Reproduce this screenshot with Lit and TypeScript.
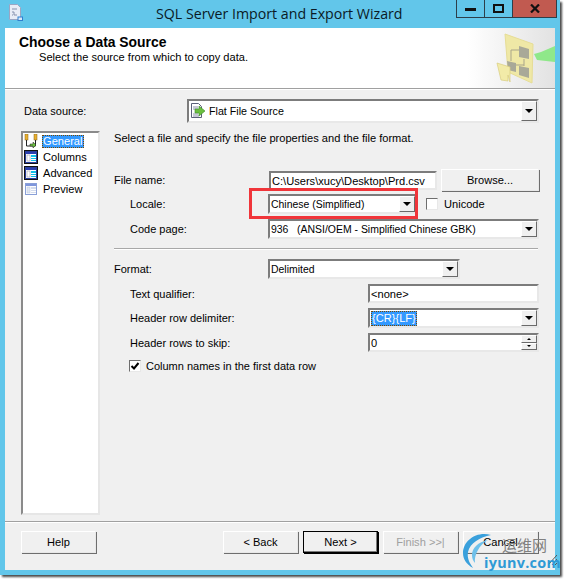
import { LitElement, html, css, svg } from "lit";
import { customElement } from "lit/decorators.js";

const tableIcon = (dark: boolean) => html`<svg class="ico" width="14" height="14" viewBox="0 0 14 14">
  ${dark ? svg`<rect x="0" y="0" width="14" height="14" fill="#111"/>` : svg``}
  <rect x="1.5" y="1.5" width="11" height="11" fill="#fff" stroke="${dark ? "#2a3f9a" : "#8aa0d8"}"/>
  <rect x="2" y="2" width="10" height="2" fill="${dark ? "#2b3fb0" : "#7f96dc"}"/>
  <rect x="3" y="5" width="3" height="6" fill="${dark ? "#fff" : "#dfe6f2"}" stroke="${dark ? "#889" : "#b8c4dc"}" stroke-width=".5"/>
  <rect x="7" y="5" width="5" height="2" fill="${dark ? "#10c0e8" : "#d4dcec"}"/>
  <rect x="7" y="8" width="5" height="1" fill="${dark ? "#10c0e8" : "#d4dcec"}"/>
  <rect x="7" y="10" width="5" height="1" fill="${dark ? "#10c0e8" : "#d4dcec"}"/>
</svg>`;

@customElement("app-root")
export class AppRoot extends LitElement {
  static styles = css`
    :host { display: block; width: 564px; height: 579px; background: #fff; font-family: "Liberation Sans", Arial, sans-serif; font-size: 11.1px; color: #000; overflow: hidden; }
    .window { position: relative; width: 560px; height: 575px; box-sizing: border-box; padding: 0 5px 5px; background: #62c6ea; display: flex; flex-direction: column; box-shadow: 2px 2px 2px #4a4a4a; }
    .titlebar { height: 28px; flex: none; display: flex; align-items: flex-start; }
    .appicon { margin: 4px 0 0 3px; flex: none; }
    .title { margin: 4px 0 0 133px; width: 260px; font: 14.2px/20px "Open Sans", sans-serif; color: #0a1a26; white-space: nowrap; flex: none; }
    .caption { margin: 0 -2px 0 auto; display: flex; height: 18px; flex: none; border: 1px solid #2d3f4a; border-top: none; box-sizing: border-box; width: 101px; }
    .caption div { display: flex; align-items: center; justify-content: center; box-sizing: border-box; }
    .cmin, .cmax { width: 28px; border-right: 1px solid #2d3f4a; }
    .cclose { flex: 1; background: #c15a50; }
    .client { flex: 1; display: flex; flex-direction: column; background: #f0f0f0; min-height: 0; }
    .header { height: 60px; flex: none; box-sizing: content-box; position: relative; background: linear-gradient(90deg, #fff 0, #fff 84%, #e2e2e2 100%); border-bottom: 1px solid #a0a0a0; box-shadow: 0 1px 0 #fff; display: flex; justify-content: space-between; overflow: hidden; }
    .htext { padding: 7px 0 0 14px; }
    .h1 { font-weight: 700; font-size: 13.9px; line-height: 15px; }
    .h2 { margin: 0 0 0 20px; line-height: 14px; }
    .hicon { flex: none; }
    .main { flex: 1; display: grid; grid-template-columns: 79px 1fr; grid-template-rows: 24px 1fr; column-gap: 14px; row-gap: 8px; padding: 10px 16px 6px 16px; min-height: 0; }
    .dslabel { display: flex; align-items: center; padding: 0 0 0 3px; line-height: 24px; margin-top: -1px; font-size: 11px; }
    .dsrow { display: flex; }
    .dsrow .combo { margin-left: 73px; flex: 1; height: 24px; font-size: 10.7px; }
    .list { background: #fff; box-sizing: border-box; border: 2px solid; border-color: #8a8a8a #e6e6e6 #e6e6e6 #8a8a8a; padding: 0 0 0 1px; }
    .item { height: 16px; display: flex; align-items: center; gap: 5px; white-space: nowrap; }
    .ico { flex: none; }
    .sel { background: #3399ff; color: #fff; outline: 1px dotted #7a4a00; outline-offset: -1px; padding: 0 2px 0 1px; line-height: 13px; margin-left: -1px; }
    .panel { display: flex; flex-direction: column; min-width: 0; }
    .intro { height: 14px; line-height: 14px; }
    .row { display: grid; grid-template-columns: 155px 1fr; align-items: center; }
    .row > span { font-size: 11px; }
    .indent { padding-left: 16px; }
    .field { box-sizing: border-box; background: #fff; border: 2px solid; border-color: #7c7c7c #e8e8e8 #e8e8e8 #7c7c7c; height: 20px; display: flex; align-items: center; padding-left: 1px; white-space: nowrap; }
    .combo { box-sizing: border-box; background: #fff; border: 2px solid; border-color: #7c7c7c #e8e8e8 #e8e8e8 #7c7c7c; height: 20px; display: flex; align-items: center; padding-left: 1px; justify-content: space-between; white-space: nowrap; font-size: 10.45px; }
    .combo span { display: flex; align-items: center; gap: 4px; }
    .arrow { align-self: stretch; width: 16px; flex: none; box-sizing: border-box; background: #f0f0f0; border: 1px solid; border-color: #fff #6a6a6a #6a6a6a #fff; display: flex; align-items: center; justify-content: center; margin-left: auto; }
    .arrow i { display: block; width: 0; height: 0; border: 4px solid transparent; border-top: 4px solid #000; border-bottom: 0; }
    .r1 { margin-top: 24px; height: 22px; grid-template-columns: 155px 168px 1fr; }
    .r1 .field { width: 168px; height: 19px; margin-top: 1px; }
    .btn { box-sizing: border-box; background: #f0f0f0; border: 1px solid; border-color: #fff #e8e8e8 #e8e8e8 #fff; box-shadow: 1px 1px 0 #6e6e6e; display: flex; align-items: center; justify-content: center; height: 22px; white-space: nowrap; }
    .browse { width: 98px; margin-left: 4px; }
    .r2 { margin-top: 3px; height: 20px; grid-template-columns: 138px 149px 1fr; position: relative; }
    .uni { display: flex; align-items: center; gap: 6px; margin-left: 9px; }
    .check { box-sizing: border-box; width: 12px; height: 12px; background: #fff; border: 1px solid; border-color: #6e6e6e #e8e8e8 #e8e8e8 #6e6e6e; display: flex; flex: none; }
    .red { position: absolute; left: 135px; top: -6px; width: 169px; height: 31px; box-sizing: border-box; border: 3px solid #f0353a; pointer-events: none; }
    .r3 { margin-top: 5px; height: 20px; grid-template-columns: 138px 1fr; }
    .hr { height: 1px; background: #a8a8a8; border-bottom: 1px solid #fff; margin: 9px 1px 0 0; flex: none; }
    .r4 { margin-top: 9px; height: 20px; grid-template-columns: 154px 192px; }
    .r5 { margin-top: 5px; height: 19px; grid-template-columns: 238px 1fr; }
    .r6 { margin-top: 5px; height: 20px; grid-template-columns: 238px 1fr; }
    .r7 { margin-top: 5px; height: 19px; grid-template-columns: 238px 1fr; }
    .r5 .field, .r6 .combo, .r7 .field { height: 100%; }
    .spin { width: 16px; align-self: stretch; margin-left: auto; display: flex; flex-direction: column; flex: none; }
    .spin div { flex: 1; background: #f0f0f0; border: 1px solid; border-color: #fff #6a6a6a #6a6a6a #fff; box-sizing: border-box; display: flex; align-items: center; justify-content: center; }
    .spin i { display: block; width: 0; height: 0; border: 2px solid transparent; }
    .spin .u { border-bottom: 2px solid #000; border-top: 0; }
    .spin .d { border-top: 2px solid #000; border-bottom: 0; }
    .r8 { margin-top: 8px; padding-left: 15px; display: flex; align-items: center; gap: 5px; height: 12px; font-size: 11px; }
    .selt { background: #3399ff; color: #fff; outline: 1px dotted #7a4a00; outline-offset: -1px; padding: 0 1px; line-height: 15px; font-size: 11.1px; }
    .code { white-space: pre; }
    .footer { height: 49px; flex: none; box-sizing: border-box; border-top: 1px solid #a0a0a0; box-shadow: inset 0 1px 0 #fff; padding: 9px 16px 0; display: flex; }
    .fbtn { width: 75px; }
    .help { margin-right: 127px; }
    .nb { margin-left: 5px; }
    .next { border: 1px solid #000; box-shadow: 1px 1px 0 #000, inset -1px -1px 0 #7a7a7a; }
    .dis { color: #a0a0a0; }
    .mark { position: absolute; right: -3px; bottom: -2px; width: 105px; height: 46px; pointer-events: none; }
    .cn { position: absolute; left: 44px; top: 4px; font: 15px/20px "Noto Sans CJK SC", sans-serif; color: #808080; white-space: nowrap; }
    .en { position: absolute; left: 26px; top: 22px; font: 700 14.4px/20px "Open Sans", sans-serif; color: #2f9ad6; white-space: nowrap; letter-spacing: .3px; }
    .arc { position: absolute; left: 0; top: 0; }
    .grip { position: absolute; right: 6px; bottom: 12px; }
  `;

  render() {
    return html`<div class="window">
      <div class="titlebar">
        <svg class="appicon" width="15" height="17" viewBox="0 0 15 17">
          <path d="M1.5.5h8l3 3v12h-11z" fill="#e8ecf6" stroke="#9aa6c4"/>
          <path d="M4 5h5M4 8h2v3h3M4 11h1" stroke="#8490ad" fill="none"/>
          <rect x="10" y="13" width="4.5" height="3.5" fill="#d8e8f8" stroke="#2f7fd0"/>
        </svg>
        <div class="title">SQL Server Import and Export Wizard</div>
        <div class="caption">
          <div class="cmin"><svg width="11" height="4"><rect y="1" width="11" height="3" fill="#111"/></svg></div>
          <div class="cmax"><svg width="11" height="9"><rect x="1" y="1" width="9" height="7" fill="none" stroke="#111" stroke-width="2"/></svg></div>
          <div class="cclose"><svg width="10" height="9" viewBox="0 0 10 9"><path d="M1 .5L9 8.5M9 .5L1 8.5" stroke="#111" stroke-width="2.2"/></svg></div>
        </div>
      </div>
      <div class="client">
        <div class="header">
          <div class="htext">
            <div class="h1">Choose a Data Source</div>
            <div class="h2">Select the source from which to copy data.</div>
          </div>
          <svg class="hicon" width="62" height="60" viewBox="0 0 62 60">
            <path d="M12 6L40 16L39 55L15 44z" fill="#efe8a6" stroke="#e6dd96"/>
            <path d="M41 26L48 24L62 18V34L44 32z" fill="#8fe88a"/>
            <path d="M18 33V22H26M31 31V38M23 37H31" stroke="#a9a58a" fill="none"/>
            <path d="M26 18L36 21V31L26 29z" fill="#a9a998"/>
            <path d="M14 33L23 35V44L15 42z" fill="#a9a998"/>
            <path d="M26 38L36 40V50L26 47z" fill="#a9a998"/>
            <path d="M4 35L17 39V54L15 47L15 53L8 52z" fill="#f2eba8" stroke="#d8cd80" stroke-width=".7"/>
          </svg>
        </div>
        <div class="main">
          <div class="dslabel">Data source:</div>
          <div class="dsrow">
            <div class="combo"><span>
              <svg width="15" height="16" viewBox="0 0 15 16"><path d="M1.5.5h7l3 3v11h-10z" fill="#fff" stroke="#5a6078"/><path d="M3 4h5M3 6h5M3 11h5M3 13h6" stroke="#8a90a8"/><path d="M5 6h4V3l6 5-6 5v-3H5z" fill="#6bbf3f" stroke="#3e8a2a" stroke-width=".6"/></svg>
              Flat File Source</span><div class="arrow"><i></i></div></div>
          </div>
          <div class="list">
            <div class="item">
              <svg class="ico" width="14" height="15" viewBox="0 0 14 15"><rect x="1" y="0" width="3" height="6" fill="#e8b030" stroke="#8a6010" stroke-width=".5"/><rect x="10" y="0" width="3" height="6" fill="#e8b030" stroke="#8a6010" stroke-width=".5"/><path d="M2.500 6V12H11.500V6" fill="none" stroke="#222"/><path d="M6 10h3V8l3 3-3 3v-2H6z" fill="#6bbf3f" stroke="#222" stroke-width=".5"/></svg>
              <span class="sel">General</span></div>
            <div class="item">${tableIcon(true)}<span>Columns</span></div>
            <div class="item">${tableIcon(true)}<span>Advanced</span></div>
            <div class="item">${tableIcon(false)}<span>Preview</span></div>
          </div>
          <div class="panel">
            <div class="intro">Select a file and specify the file properties and the file format.</div>
            <div class="row r1"><span>File name:</span><div class="field">C:\\Users\\xucy\\Desktop\\Prd.csv</div><div class="btn browse">Browse...</div></div>
            <div class="row r2 indent"><span>Locale:</span>
              <div class="combo">Chinese (Simplified)<div class="arrow"><i></i></div></div>
              <div class="uni"><div class="check"></div>Unicode</div>
              <div class="red"></div>
            </div>
            <div class="row r3 indent"><span>Code page:</span><div class="combo"><span class="code">936   (ANSI/OEM - Simplified Chinese GBK)</span><div class="arrow"><i></i></div></div></div>
            <div class="hr"></div>
            <div class="row r4"><span>Format:</span><div class="combo">Delimited<div class="arrow"><i></i></div></div></div>
            <div class="row r5 indent"><span>Text qualifier:</span><div class="field">&lt;none&gt;</div></div>
            <div class="row r6 indent"><span>Header row delimiter:</span><div class="combo"><span class="selt">{CR}{LF}</span><div class="arrow"><i></i></div></div></div>
            <div class="row r7 indent"><span>Header rows to skip:</span><div class="field">0<div class="spin"><div><i class="u"></i></div><div><i class="d"></i></div></div></div></div>
            <div class="r8"><div class="check"><svg width="10" height="10" viewBox="0 0 10 10"><path d="M1.500 5L4 7.500L8.500 2" fill="none" stroke="#000" stroke-width="2"/></svg></div>Column names in the first data row</div>
          </div>
        </div>
        <div class="footer">
          <div class="btn fbtn help">Help</div>
          <div class="btn fbtn">&lt; Back</div>
          <div class="btn fbtn nb next">Next &gt;</div>
          <div class="btn fbtn nb dis">Finish &gt;&gt;|</div>
          <div class="btn fbtn nb">Cancel</div>
        </div>
      </div>
      <div class="mark">
        <svg class="arc" width="40" height="46" viewBox="0 0 40 46">
          <path d="M33 4C18 0 5 10 5 22C5 28 8 33 15 37C11 31 9 27 10 21C12 12 22 6 33 4z" fill="#3aa0dc"/>
          <path d="M30 9C20 11 14 17 14 24C14 27 15 30 17 32C16 24 21 14 30 9z" fill="#6fc0ea"/>
        </svg>
        <svg class="grip" width="9" height="10" viewBox="0 0 9 10"><path d="M0 10L9 0M4 10L9 4M7 10L9 8" stroke="#555" fill="none"/></svg>
        <div class="cn">运维网</div>
        <div class="en">iyunv.com</div>
      </div>
    </div>`;
  }
}
